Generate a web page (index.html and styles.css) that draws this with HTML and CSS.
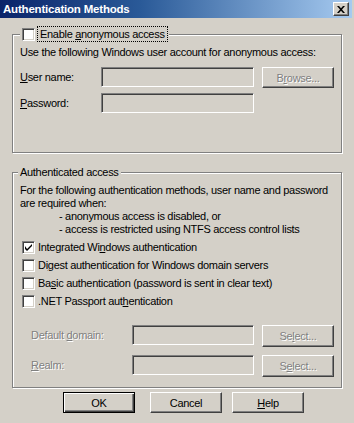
FILE: index.html
```html
<!DOCTYPE html>
<html>
<head>
<meta charset="utf-8">
<link rel="stylesheet" href="styles.css">
</head>
<body>
<div class="window">
  <div class="titlebar">
    <span class="title">Authentication Methods</span>
    <span class="close">
      <svg width="8" height="7" viewBox="0 0 8 7"><path d="M0 0h2l2 2.2L6 0h2L5 3.5 8 7H6L4 4.8 2 7H0l3-3.5z" fill="#000"/></svg>
    </span>
  </div>
  <div class="content">
    <fieldset class="group g1">
      <legend class="legend-check">
        <span class="check"><span class="box"></span><span class="focus">Enable <u>a</u>nonymous access</span></span>
      </legend>
      <p class="text t1">Use the following Windows user account for anonymous access:</p>
      <div class="row r1">
        <span class="lbl lbl1"><u>U</u>ser name:</span>
        <span class="input in1"></span>
        <span class="btn small disabled">B<u>r</u>owse...</span>
      </div>
      <div class="row r2">
        <span class="lbl lbl1"><u>P</u>assword:</span>
        <span class="input in1"></span>
      </div>
    </fieldset>

    <fieldset class="group g2">
      <legend class="legend-text">Authenticated access</legend>
      <p class="text t2">For the following authentication methods, user name and password<br>are required when:</p>
      <p class="text indent">- anonymous access is disabled, or<br>- access is restricted using NTFS access control lists</p>
      <div class="checks">
        <div class="check"><span class="box checked"><svg width="7" height="7" viewBox="0 0 7 7"><path d="M0 2v3l2 2 5-5V0L2 5z" fill="#000"/></svg></span><span>Integrated Wi<u>n</u>dows authentication</span></div>
        <div class="check"><span class="box"></span><span>Di<u>g</u>est authentication for Windows domain servers</span></div>
        <div class="check"><span class="box"></span><span>Ba<u>s</u>ic authentication (password is sent in clear text)</span></div>
        <div class="check"><span class="box"></span><span>.NET Passport aut<u>h</u>entication</span></div>
      </div>
      <div class="row r3">
        <span class="lbl lbl2 disabled">Default <u>d</u>omain:</span>
        <span class="input in2"></span>
        <span class="btn small tall disabled">Se<u>l</u>ect...</span>
      </div>
      <div class="row r4">
        <span class="lbl lbl2 disabled"><u>R</u>ealm:</span>
        <span class="input in2"></span>
        <span class="btn small tall disabled">S<u>e</u>lect...</span>
      </div>
    </fieldset>

    <div class="buttons">
      <span class="btn default">OK</span>
      <span class="btn cancel">Cancel</span>
      <span class="btn help"><u>H</u>elp</span>
    </div>
  </div>
</div>
</body>
</html>
```

FILE: styles.css
```css
html, body {
  margin: 0;
  padding: 0;
  background: #d4d0c8;
}
body {
  font-family: "Liberation Sans", Arial, sans-serif;
  font-size: 11px;
  letter-spacing: -0.3px;
  color: #000;
  white-space: nowrap;
}
.window {
  width: 354px;
  height: 423px;
  box-sizing: border-box;
  background: #d4d0c8;
  overflow: hidden;
}
.titlebar {
  height: 18px;
  width: 352px;
  background: linear-gradient(to right, #0a246a 0%, #2a5a98 40%, #a6caf0 100%);
  display: flex;
  align-items: center;
  justify-content: space-between;
  box-sizing: border-box;
  padding: 0 3px 0 3px;
}
.title {
  color: #fff;
  font-weight: bold;
  font-size: 11.5px;
  letter-spacing: -0.2px;
}
.close {
  width: 16px;
  height: 14px;
  box-sizing: border-box;
  background: #d4d0c8;
  border: 1px solid;
  border-color: #fff #404040 #404040 #fff;
  box-shadow: inset -1px -1px 0 #808080;
  display: flex;
  align-items: center;
  justify-content: center;
}
.content {
  padding: 0 12px;
}
.group {
  margin: 0;
  padding: 0 7px;
  border: 1px solid #808080;
  box-shadow: 1px 1px 0 #fff, inset 1px 1px 0 #fff;
  min-width: 0;
}
.g1 {
  margin-top: 9px;
  padding-bottom: 39px;
}
.g2 {
  margin-top: 13px;
  padding-bottom: 10px;
}
legend {
  padding: 0 2px;
  background: #d4d0c8;
}
.legend-check {
  line-height: 14px;
  height: 14px;
}
.legend-text {
  line-height: 13px;
  margin-left: -2px;
}
.check {
  display: flex;
  align-items: center;
}
.box {
  width: 13px;
  height: 13px;
  box-sizing: border-box;
  background: #fff;
  border: 1px solid;
  border-color: #808080 #fff #fff #808080;
  box-shadow: inset 1px 1px 0 #404040, inset -1px -1px 0 #d4d0c8;
  display: flex;
  align-items: center;
  justify-content: center;
  flex: none;
  margin-right: 3px;
}
.focus {
  outline: 1px dotted #000;
  outline-offset: 0;
  padding: 0 2px;
  line-height: 14px;
}
.text {
  margin: 0;
  line-height: 13px;
}
.t1 { margin-top: 5px; }
.t2 { margin-top: 5px; }
.indent { padding-left: 39px; }
.row {
  display: flex;
  align-items: flex-start;
}
.lbl {
  line-height: 20px;
  flex: none;
}
.lbl1 { width: 81px; }
.lbl2 { width: 101px; padding-left: 11px; }
.r1 { margin-top: 8px; }
.r2 { margin-top: 5px; }
.r3 { margin-top: 15px; }
.r4 { margin-top: 8px; }
.input {
  height: 20px;
  box-sizing: border-box;
  background: #d4d0c8;
  border: 1px solid;
  border-color: #808080 #fff #fff #808080;
  box-shadow: inset 1px 1px 0 #404040, inset -1px -1px 0 #d4d0c8;
  flex: none;
}
.in1 { width: 153px; }
.in2 { width: 122px; }
.btn {
  display: flex;
  align-items: center;
  justify-content: center;
  width: 72px;
  height: 21px;
  box-sizing: border-box;
  background: #d4d0c8;
  border: 1px solid;
  border-color: #fff #404040 #404040 #fff;
  box-shadow: inset -1px -1px 0 #808080;
  flex: none;
}
.small { margin-left: 8px; }
.tall { height: 22px; }
.disabled {
  color: #808080;
  text-shadow: 1px 1px 0 #fff;
}
.checks {
  margin-top: 2px;
  padding-left: 2px;
}
.checks .check {
  height: 18px;
}
.buttons {
  display: flex;
  margin-top: 4px;
  padding-left: 51px;
}
.btn.default {
  border: 1px solid #000;
  box-shadow: inset 1px 1px 0 #fff, inset -1px -1px 0 #404040, inset -2px -2px 0 #808080;
}
.cancel { margin-left: 15px; }
.help { margin-left: 10px; }
```
